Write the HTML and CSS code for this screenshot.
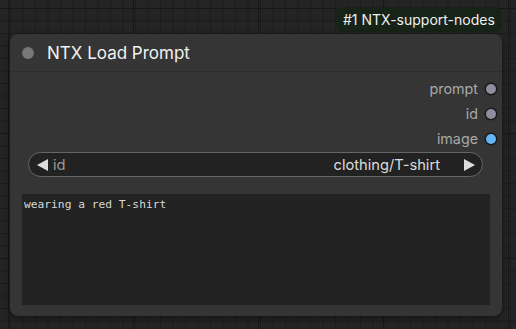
FILE: index.html
```html
<!DOCTYPE html>
<html>
<head>
<meta charset="utf-8">
<link rel="stylesheet" href="styles.css">
</head>
<body>
<div class="canvas">
  <div class="badge">#1 NTX-support-nodes</div>
  <div class="node">
    <div class="title">
      <span class="title-dot"></span>
      <span class="title-text">NTX Load Prompt</span>
    </div>
    <div class="body">
      <div class="outputs">
        <div class="out"><span class="out-label">prompt</span><span class="slot"></span></div>
        <div class="out"><span class="out-label">id</span><span class="slot"></span></div>
        <div class="out"><span class="out-label">image</span><span class="slot slot-image"></span></div>
      </div>
      <div class="combo">
        <span class="arrow arrow-left"></span>
        <span class="combo-label">id</span>
        <span class="combo-value">clothing/T-shirt</span>
        <span class="arrow arrow-right"></span>
      </div>
      <div class="textarea">wearing a red T-shirt</div>
    </div>
  </div>
</div>
</body>
</html>
```
FILE: styles.css
```css
* { box-sizing: border-box; }
html, body { margin: 0; padding: 0; }
body {
  width: 516px;
  height: 329px;
  overflow: hidden;
  font-family: Inter, "Liberation Sans", sans-serif;
}
.canvas {
  position: relative;
  width: 516px;
  height: 329px;
  background-color: #242424;
  background-image:
    linear-gradient(to right, #171717 1px, transparent 1px),
    linear-gradient(to bottom, #171717 1px, transparent 1px),
    linear-gradient(to right, #1c1c1c 1px, transparent 1px),
    linear-gradient(to bottom, #1c1c1c 1px, transparent 1px);
  background-size: 125px 125px, 125px 125px, 12.5px 12.5px, 12.5px 12.5px;
  background-position: 8px 8px, 8px 8px, 10px 8px, 10px 8px;
}
.badge {
  position: absolute;
  left: 336px;
  top: 7px;
  height: 25px;
  padding: 0 7px;
  border-radius: 7px;
  background: #172317;
  color: #f0f0f0;
  font-size: 14px;
  line-height: 25px;
  white-space: nowrap;
}
.node {
  position: absolute;
  left: 10px;
  top: 34px;
  width: 492px;
  height: 282px;
  background: #353535;
  border-radius: 8px;
  box-shadow: 0 2px 6px rgba(0,0,0,0.45);
  display: flex;
  flex-direction: column;
}
.title {
  height: 38px;
  flex: none;
  display: flex;
  align-items: center;
  padding-left: 12px;
  border-bottom: 1px solid #2c2c2c;
  border-radius: 8px 8px 0 0;
}
.title-dot {
  width: 12px;
  height: 12px;
  border-radius: 50%;
  background: #777;
  margin-right: 13px;
}
.title-text {
  color: #f2f2f2;
  font-size: 17px;
}
.body {
  flex: 1;
  display: flex;
  flex-direction: column;
  padding: 4px 12px 11px 12px;
}
.outputs {
  display: flex;
  flex-direction: column;
  margin-right: -6px;
}
.out {
  height: 25px;
  display: flex;
  align-items: center;
  justify-content: flex-end;
}
.out-label {
  color: #a8a8a8;
  font-size: 14.3px;
  margin-right: 8px;
}
.slot {
  width: 10px;
  height: 10px;
  border-radius: 50%;
  background: #8e8ea0;
  box-shadow: 0 0 0 1.5px #1a1a1a;
}
.slot-image { background: #64b5f6; }
.combo {
  margin: 1px 7px 0 6px;
  height: 25px;
  border: 1px solid #666;
  border-radius: 13px;
  background: #222;
  display: flex;
  align-items: center;
  padding: 0 7px 0 8px;
  font-size: 14.7px;
}
.arrow {
  width: 0;
  height: 0;
  border-top: 6px solid transparent;
  border-bottom: 6px solid transparent;
}
.arrow-left { border-right: 11px solid #ddd; }
.arrow-right { border-left: 11px solid #ddd; }
.combo-label {
  color: #999;
  margin-left: 5px;
  flex: 1;
}
.combo-value {
  color: #dcdcdc;
  margin-right: 24px;
}
.textarea {
  margin-top: 17px;
  flex: 1;
  background: #222;
  color: #d8d8d8;
  font-family: "DejaVu Sans Mono", monospace;
  font-size: 11.25px;
  padding: 4px 2px;
}
```
